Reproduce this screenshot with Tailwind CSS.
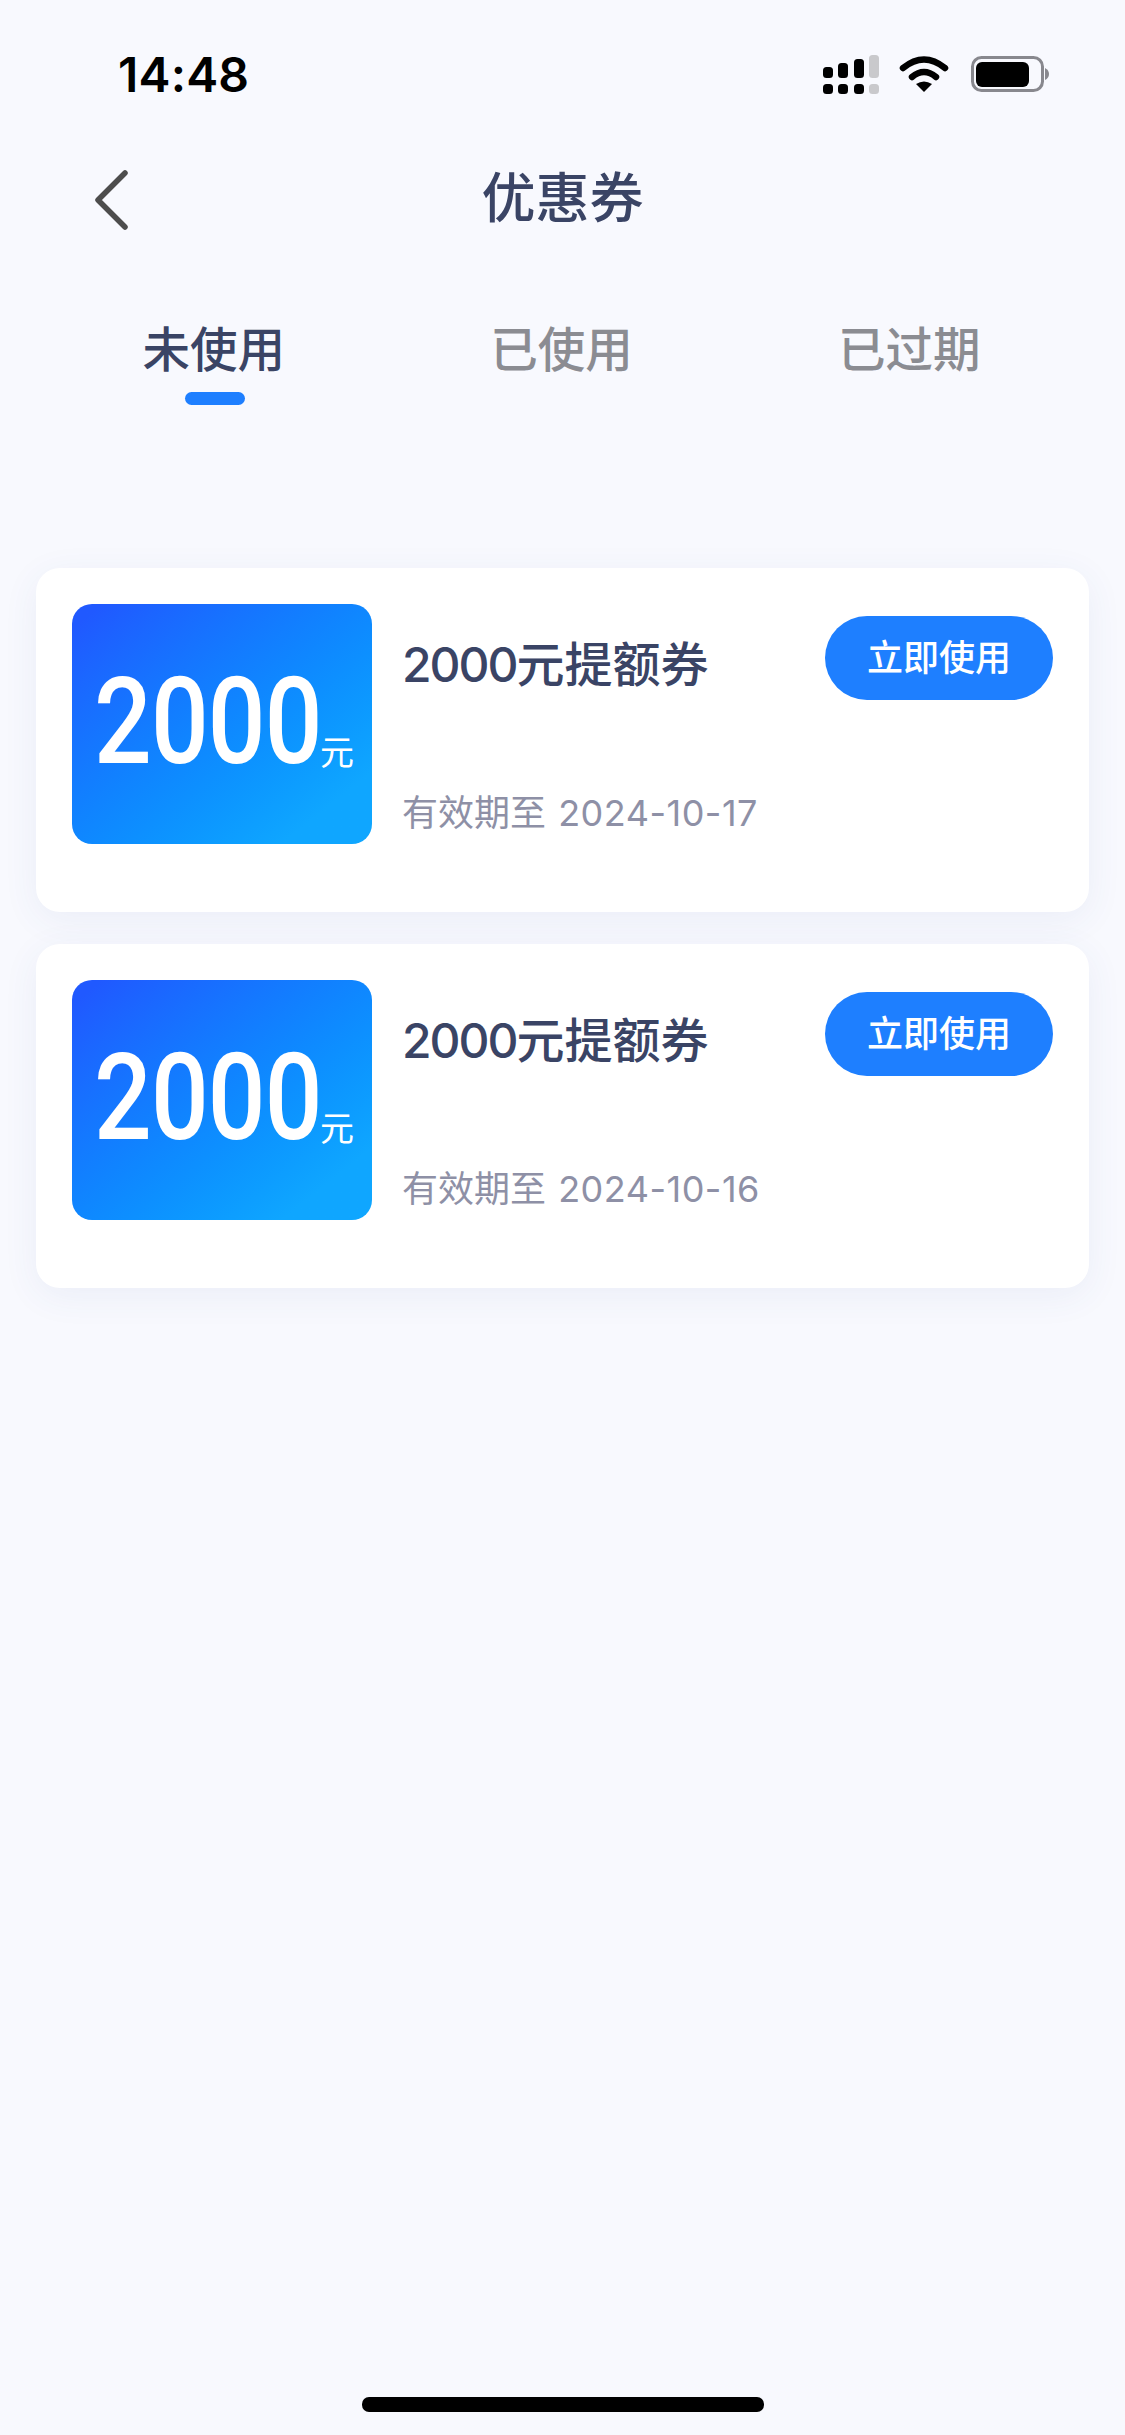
<!DOCTYPE html>
<html lang="zh-CN">
<head>
  <meta charset="UTF-8">
  <meta name="viewport" content="width=device-width, initial-scale=1.0">
  <title>优惠券</title>
  <script src="https://cdn.jsdelivr.net/npm/@tailwindcss/browser@4"></script>
</head>
<body class="bg-[#f8f9fe] font-['Inter','Noto_Sans_CJK_SC',sans-serif] w-[1125px] h-[2435px] overflow-hidden flex flex-col">

  <!-- Status bar -->
  <div class="h-[150px] flex items-center justify-between pl-[118px] pr-[76px] shrink-0">
    <span class="text-[48px] font-semibold text-black leading-none tracking-[0.2px]">14:48</span>
    <svg width="226" height="40" viewBox="0 0 226 40" class="mt-[-1px]">
      <rect x="0" y="12" width="10" height="11" rx="3.5" fill="#000"/>
      <rect x="15" y="8" width="10" height="15" rx="3.5" fill="#000"/>
      <rect x="31" y="4" width="10" height="19" rx="3.5" fill="#000"/>
      <rect x="46" y="0" width="10" height="23" rx="3.5" fill="#c9c9cc"/>
      <rect x="0" y="29" width="10" height="10" rx="3.5" fill="#000"/>
      <rect x="15" y="29" width="10" height="10" rx="3.5" fill="#000"/>
      <rect x="31" y="29" width="10" height="10" rx="3.5" fill="#000"/>
      <rect x="46" y="29" width="10" height="10" rx="3.5" fill="#c9c9cc"/>
      <path d="M80 13 Q101 -4 122 13" fill="none" stroke="#000" stroke-width="6.5" stroke-linecap="round"/>
      <path d="M89 22 Q101 12 113 22" fill="none" stroke="#000" stroke-width="6.5" stroke-linecap="round"/>
      <path d="M93 29 Q101 24 109 29 L101 37 Z" fill="#000"/>
      <rect x="149.5" y="2.5" width="70" height="33" rx="9" fill="none" stroke="#88888e" stroke-width="3"/>
      <rect x="153" y="7" width="53" height="25" rx="6" fill="#000"/>
      <path d="M222 13 Q226 15 226 19 Q226 23 222 25 Z" fill="#88888e"/>
    </svg>
  </div>

  <!-- Nav bar -->
  <header class="relative h-[98px] flex items-center justify-center shrink-0">
    <svg width="40" height="62" viewBox="0 0 40 62" class="absolute left-[92px] top-[19px]">
      <path d="M33 4 L6 31 L33 58" fill="none" stroke="#4d4d4d" stroke-width="5.5" stroke-linecap="round" stroke-linejoin="round"/>
    </svg>
    <h1 class="text-[54px] font-medium text-[#3a4465] leading-none">优惠券</h1>
  </header>

  <!-- Tabs -->
  <nav class="grid grid-cols-3 pl-[40px] pr-[42px] pt-[70px] shrink-0">
    <div class="flex flex-col items-center">
      <span class="text-[47.5px] font-medium text-[#3a4465] leading-[64px]">未使用</span>
      <span class="w-[60px] h-[13px] rounded-full bg-[#1e7fff] mt-[10px] ml-[2px]"></span>
    </div>
    <div class="text-center"><span class="text-[47.5px] font-medium text-[#8b8c92] leading-[64px]">已使用</span></div>
    <div class="text-center"><span class="text-[47.5px] font-medium text-[#8b8c92] leading-[64px]">已过期</span></div>
  </nav>

  <!-- Coupons -->
  <main class="mt-[163px] px-[36px] flex flex-col gap-[32px]">

    <section class="bg-white rounded-[24px] h-[344px] p-[36px] flex shadow-[0_8px_36px_rgba(60,80,160,0.07)]">
      <div class="w-[300px] h-[240px] rounded-[20px] bg-linear-to-br from-[#2059ff] from-5% to-[#0fa6ff] to-85% flex items-end text-white pb-[77px] pl-[22px] shrink-0">
        <span class="font-['Roboto'] font-medium text-[121px] leading-[90px] scale-x-[0.84] origin-left tracking-[-1px] mr-[-45px]">2000</span>
        <span class="text-[34px] leading-[34px] mb-[-3px]">元</span>
      </div>
      <div class="flex-1 ml-[30px]">
        <div class="flex justify-between items-start">
          <h2 class="mt-[25px] text-[48px] font-medium text-[#3a4465] leading-[72px]"><span class="tracking-[-2px]">2000</span>元提额券</h2>
          <button class="mt-[12px] w-[228px] h-[84px] rounded-full bg-[#1e7fff] text-white text-[36px] font-medium leading-none">立即使用</button>
        </div>
        <p class="mt-[88px] text-[36px] text-[#8e90a6] leading-[48px]">有效期至 <span class="ml-[2px] tracking-[0.5px]">2024-10-17</span></p>
      </div>
    </section>

    <section class="bg-white rounded-[24px] h-[344px] p-[36px] flex shadow-[0_8px_36px_rgba(60,80,160,0.07)]">
      <div class="w-[300px] h-[240px] rounded-[20px] bg-linear-to-br from-[#2059ff] from-5% to-[#0fa6ff] to-85% flex items-end text-white pb-[77px] pl-[22px] shrink-0">
        <span class="font-['Roboto'] font-medium text-[121px] leading-[90px] scale-x-[0.84] origin-left tracking-[-1px] mr-[-45px]">2000</span>
        <span class="text-[34px] leading-[34px] mb-[-3px]">元</span>
      </div>
      <div class="flex-1 ml-[30px]">
        <div class="flex justify-between items-start">
          <h2 class="mt-[25px] text-[48px] font-medium text-[#3a4465] leading-[72px]"><span class="tracking-[-2px]">2000</span>元提额券</h2>
          <button class="mt-[12px] w-[228px] h-[84px] rounded-full bg-[#1e7fff] text-white text-[36px] font-medium leading-none">立即使用</button>
        </div>
        <p class="mt-[88px] text-[36px] text-[#8e90a6] leading-[48px]">有效期至 <span class="ml-[2px] tracking-[0.5px]">2024-10-16</span></p>
      </div>
    </section>
  </main>

  <!-- Home indicator -->
  <div class="mt-auto mb-[23px] mx-auto w-[402px] h-[15px] rounded-[7px] bg-black"></div>
</body>
</html>
